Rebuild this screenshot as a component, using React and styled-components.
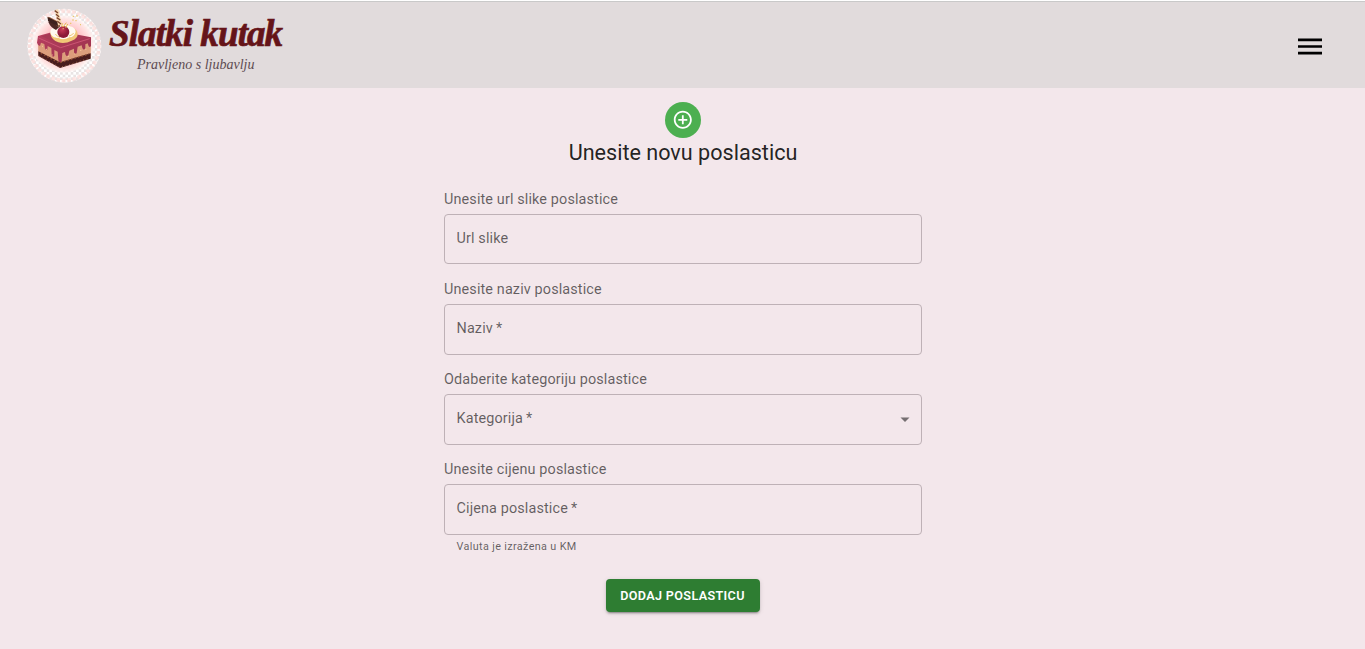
import React from "react";
import styled, { createGlobalStyle } from "styled-components";

const GlobalStyle = createGlobalStyle`
  *, *::before, *::after { box-sizing: border-box; }
  body {
    margin: 0;
    min-height: 100vh;
    overflow: hidden;
    background: #f3e7eb;
    color: rgba(0, 0, 0, 0.87);
    font-family: Roboto, "Liberation Sans", sans-serif;
  }
`;

const Header = styled.header`
  height: 88px;
  padding: 7px 39px 0 26px;
  display: flex;
  justify-content: space-between;
  align-items: flex-start;
  background: #e1dbdc;
  border-top: 1px solid #fff;
  box-shadow: inset 0 1px 0 #c9c9c9;
`;

const Brand = styled.div`
  display: flex;
  gap: 7px;
`;

const BrandText = styled.div`
  width: 176px;
  display: flex;
  flex-direction: column;
  white-space: nowrap;
`;

const BrandName = styled.span`
  margin-top: 4px;
  height: 44px;
  font: italic 700 37px/44px "Liberation Serif", serif;
  letter-spacing: -0.9px;
  color: #651419;
  -webkit-text-stroke: 0.7px #651419;
`;

const Tagline = styled.span`
  margin: 0 0 0 28px;
  font: italic 400 14px/18px "Liberation Serif", serif;
  color: #5d4b51;
`;

const MenuButton = styled.button`
  margin-top: 22px;
  padding: 0;
  border: 0;
  background: none;
  display: flex;
`;

const Main = styled.main`
  padding-top: 14px;
  display: flex;
  flex-direction: column;
  align-items: center;
`;

const Avatar = styled.div`
  width: 36px;
  height: 36px;
  border-radius: 50%;
  background: #4caf50;
  display: flex;
  align-items: center;
  justify-content: center;
`;

const Title = styled.h1`
  margin: 0 0 21px;
  padding-left: 1px;
  font-size: 21.6px;
  line-height: 29px;
  font-weight: 400;
`;

const Form = styled.form`
  width: 478px;
  display: flex;
  flex-direction: column;
`;

const Field = styled.div`
  height: 90px;
  display: flex;
  flex-direction: column;
`;

const Label = styled.label`
  height: 26px;
  flex: none;
  padding: 2px 0 0 0.5px;
  font-size: 14.4px;
  line-height: 20px;
  letter-spacing: 0.135px;
  color: rgba(0, 0, 0, 0.6);
`;

const Control = styled.div`
  height: ${(p) => (p.$short ? 50 : 51)}px;
  flex: none;
  padding: 0 10px ${(p) => (p.$short ? 1 : 3)}px 12px;
  display: flex;
  align-items: center;
  justify-content: space-between;
  border: 1px solid #beb1b6;
  border-radius: 4px;
  font-size: 14.4px;
  letter-spacing: 0.135px;
  color: rgba(0, 0, 0, 0.6);
`;

const Asterisk = styled.span`
  margin-left: -0.7px;
`;

const Arrow = styled.svg`
  width: 12px;
  height: 6px;
  margin-top: 3px;
`;

const Helper = styled.p`
  margin: 3px 13px 0;
  font-size: 10.8px;
  line-height: 18px;
  letter-spacing: 0.36px;
  color: rgba(0, 0, 0, 0.6);
`;

const Submit = styled.button`
  align-self: center;
  width: 154px;
  height: 33px;
  margin-top: 31px;
  padding: 0;
  border: 0;
  border-radius: 4px;
  background: #2e7d32;
  color: #fff;
  font: 600 12.6px/22px Roboto, "Liberation Sans", sans-serif;
  letter-spacing: 0.36px;
  text-transform: uppercase;
  white-space: nowrap;
  box-shadow: 0 3px 1px -2px rgba(0, 0, 0, 0.2), 0 2px 2px rgba(0, 0, 0, 0.14), 0 1px 5px rgba(0, 0, 0, 0.12);
`;

function CakeLogo() {
  return (
    <svg width="76" height="76" viewBox="18 24 228 228" aria-hidden="true">
      <defs>
        <pattern id="checks" width="16" height="16" patternUnits="userSpaceOnUse">
          <path d="M0 0h16v16H0z" fill="#fff" />
          <path d="M0 0h8v8H0zM8 8h8v8H8z" fill="#e9e4e4" />
        </pattern>
        <radialGradient id="glow">
          <stop offset="0.6" stopColor="#ffc4c8" />
          <stop offset="0.85" stopColor="#ffe1e0" />
          <stop offset="1" stopColor="#fff5f3" stopOpacity="0.7" />
        </radialGradient>
        <linearGradient id="glaze" x2="1" y2="1">
          <stop offset="0" stopColor="#b94060" />
          <stop offset="1" stopColor="#98304b" />
        </linearGradient>
        <radialGradient id="berry" cx="0.4" cy="0.3">
          <stop offset="0" stopColor="#c93a58" />
          <stop offset="1" stopColor="#8c1b38" />
        </radialGradient>
      </defs>
      <circle cx="133" cy="137" r="111" fill="url(#checks)" />
      <circle cx="133" cy="137" r="104" fill="none" stroke="#ffdcd8" strokeWidth="11" strokeDasharray="11 5" opacity="0.7" />
      <ellipse cx="130" cy="132" rx="94" ry="86" fill="url(#glow)" />
      <path d="M54 112 120 146v56l-65-36zM213 112 120 146v56l92-28z" fill="#dc9e7c" />
      <path d="m55 154 65 33 92-27v16l-92 28-65-36z" fill="#491c1d" />
      <path d="m62 160 56 29 89-27" fill="none" stroke="#8d4a30" strokeWidth="4" strokeDasharray="5 6" />
      <path d="m58 168 62 34 88-27" fill="none" stroke="#c78a60" strokeWidth="2" strokeDasharray="3 8" />
      <path d="M54 108 111 92l102 20v25q-3 7-7 2l-3-9-7 3v12q-5 8-9-1l-2-8-12 4-3 19q-5 6-8-2v-11l-14 6-3 14q-6 6-9-3l-1-7-8 3-2 25q-7 7-10-4l-2-25-10-5v18q-5 5-8-2l-1-22-11-6-1 11q-5 4-7-3l-2-14-10-4-3 10q-7-1-9-10z" fill="url(#glaze)" />
      <path d="m64 108 50-12 86 16-75 25z" fill="#a83a55" />
      <path d="m56 114 66 29 87-27" fill="none" stroke="#cc5673" strokeWidth="3" />
      <path d="M91 101q0-13 12-15 9-11 25-8 20-7 30 7 13 2 15 16 1 14-18 21-19 10-40 5-20-7-24-26z" fill="#f1c978" />
      <path d="M91 98q-1-12 10-14 8-9 19-7 18-8 31 2 15 4 16 16-3 16-19 17-18 10-32 2-21 0-25-16z" fill="#fffaf0" />
      <path d="M105 114q19 12 48 2M106 102q5 8 14 10M147 108q10-2 14-9" fill="none" stroke="#efc770" strokeWidth="3" />
      <path d="m85 66 20-3 16 15-13 12q-16-7-23-24z" fill="#4b2723" />
      <path d="m81 53 8-2 33 18-6 13z" fill="#9d6745" />
      <path d="m83 51 34 17-4 10-29-14z" fill="#3e211e" />
      <path d="m104 30 10-2 12 44-12 4z" fill="#f5d9b0" />
      <path d="m104 32 10 7M108 43l9 7M110 53l11 7M112 64l11 8" stroke="#7b432e" strokeWidth="4" />
      <circle cx="130" cy="96" r="18" fill="url(#berry)" />
      <path d="m124 74 5 7 10-13M143 72l-6 12" fill="none" stroke="#e7b549" strokeWidth="3" />
      <path d="M158 49h4M169 48h4M157 60h4M166 62h4M150 70h4M180 74h3M125 72h4M128 86h3" stroke="#eac66d" strokeWidth="4" />
      <path d="M66 139h3M77 148h4M95 165h3M143 169h4M163 162h3M180 151h4M196 148h3" stroke="#f7c69a" strokeWidth="3" />
    </svg>
  );
}

function MenuIcon() {
  return (
    <svg width="32" height="33" viewBox="0 0 24 24" aria-hidden="true">
      <path d="M3 18h18v-2H3v2zm0-5h18v-2H3v2zm0-7v2h18V6H3z" />
    </svg>
  );
}

function AddIcon() {
  return (
    <svg width="21.6" height="21.6" viewBox="0 0 24 24" fill="#fff" aria-hidden="true">
      <path d="M13 7h-2v4H7v2h4v4h2v-4h4v-2h-4V7zm-1-5C6.48 2 2 6.48 2 12s4.48 10 10 10 10-4.48 10-10S17.52 2 12 2zm0 18c-4.41 0-8-3.59-8-8s3.59-8 8-8 8 3.59 8 8-3.59 8-8 8z" />
    </svg>
  );
}

const fields = [
  { label: "Unesite url slike poslastice", text: "Url slike", short: true },
  { label: "Unesite naziv poslastice", text: "Naziv", required: true },
  { label: "Odaberite kategoriju poslastice", text: "Kategorija", required: true, select: true },
  { label: "Unesite cijenu poslastice", text: "Cijena poslastice", required: true, helper: "Valuta je izražena u KM" },
];

export default function App() {
  return (
    <>
      <GlobalStyle />
      <Header>
        <Brand>
          <CakeLogo />
          <BrandText>
            <BrandName>Slatki kutak</BrandName>
            <Tagline>Pravljeno s ljubavlju</Tagline>
          </BrandText>
        </Brand>
        <MenuButton type="button" aria-label="Meni">
          <MenuIcon />
        </MenuButton>
      </Header>
      <Main>
        <Avatar>
          <AddIcon />
        </Avatar>
        <Title>Unesite novu poslasticu</Title>
        <Form>
          {fields.map((f) => (
            <Field key={f.label}>
              <Label>{f.label}</Label>
              <Control $short={f.short}>
                <span>
                  {f.text}
                  {f.required && <Asterisk> *</Asterisk>}
                </span>
                {f.select && (
                  <Arrow viewBox="0 0 12 6">
                    <path d="M1.5 0.5h9L6 5z" fill="#756f71" />
                  </Arrow>
                )}
              </Control>
              {f.helper && <Helper>{f.helper}</Helper>}
            </Field>
          ))}
          <Submit type="button">Dodaj poslasticu</Submit>
        </Form>
      </Main>
    </>
  );
}
